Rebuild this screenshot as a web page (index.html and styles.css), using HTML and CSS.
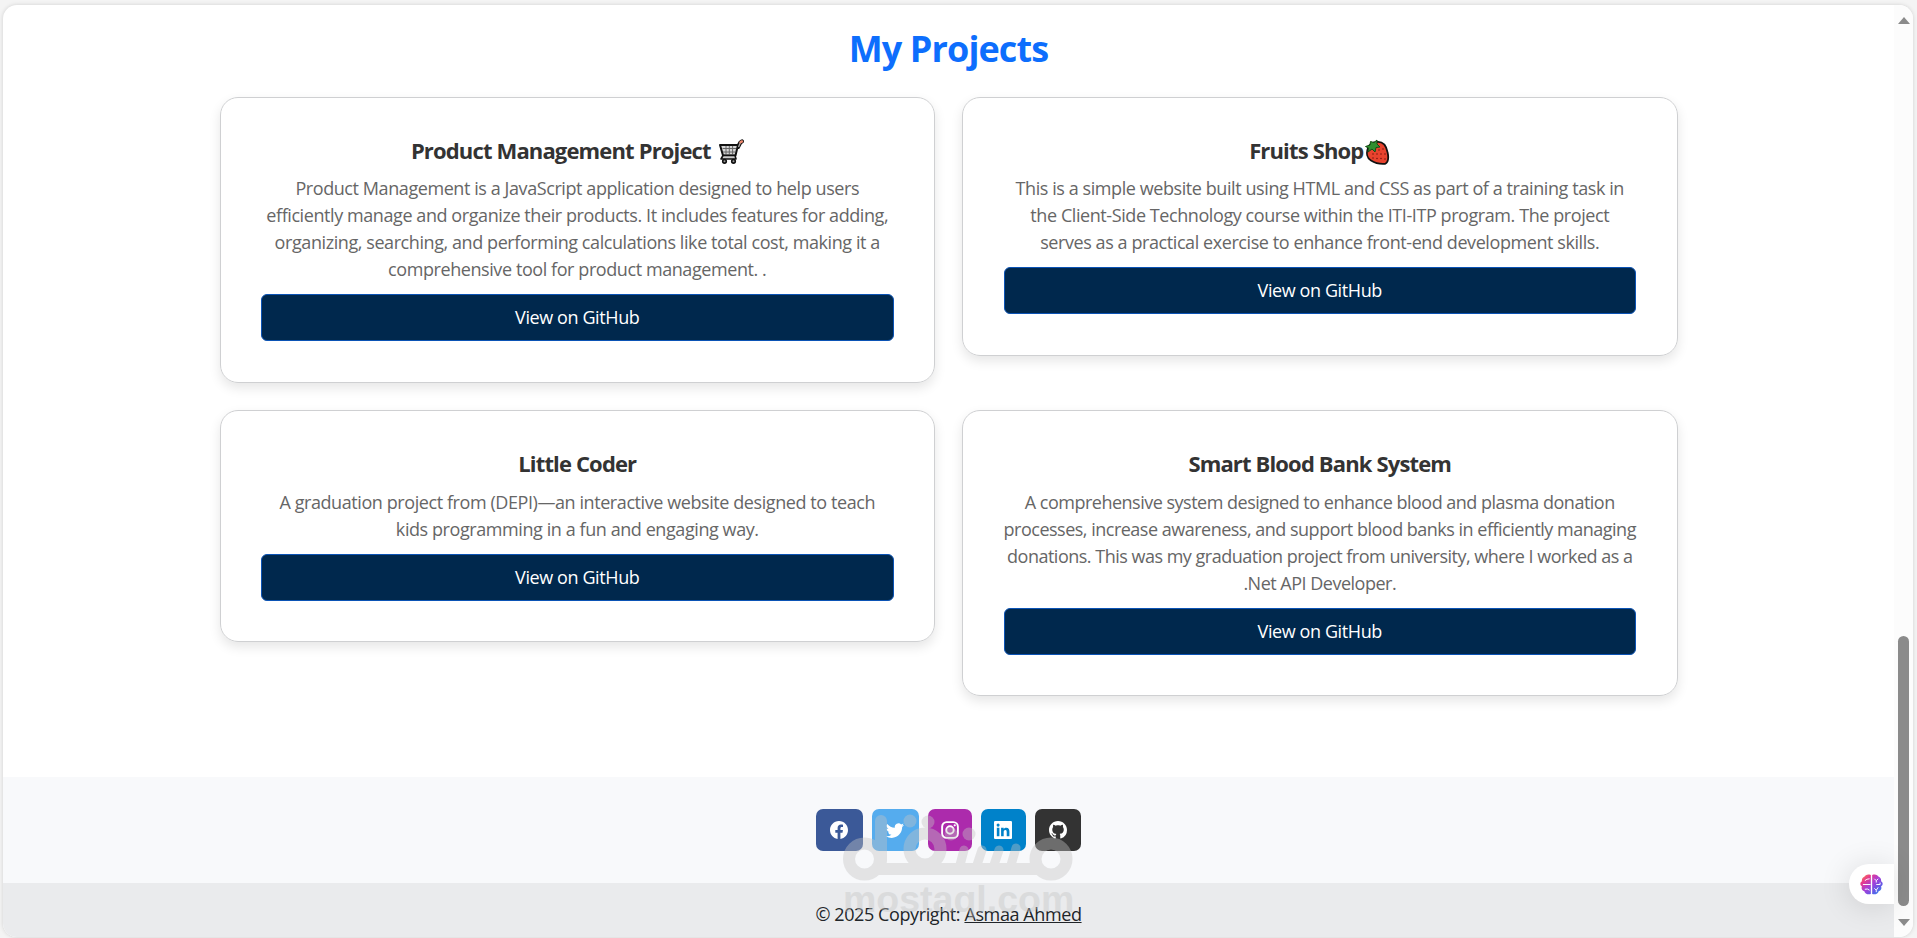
FILE: index.html
```html
<!DOCTYPE html>
<html lang="en">
<head>
    <meta charset="UTF-8">
    <title>My Projects</title>
    <link rel="stylesheet" href="styles.css">
</head>

<body>

<div class="window">
    <div class="page">
        <section class="projects">
            <h2>My Projects</h2>
            <div class="project-list">

                <div class="card with-emoji">
                    <h5>Product Management Project
                        <svg class="emoji cart" viewBox="0 0 26 26">
                            <path d="M20 8 22.3 3.5 24 2.3" fill="none" stroke="#111" stroke-width="4" stroke-linecap="round"/>
                            <path d="M2 6H20L17.5 16.5H5Z" fill="#d5d5d5" stroke="#111" stroke-width="2" stroke-linejoin="round"/>
                            <path d="M4.5 9.5H18M5 13H17M8 7V16M11.3 7V16M14.6 7V16" stroke="#666" stroke-width="1"/>
                            <path d="M5 16.5 3 20H18L17 16.5Z" fill="#ccc" stroke="#111" stroke-width="1.6" stroke-linejoin="round"/>
                            <path d="M20.5 8 22.3 3.8" stroke="#aaa" stroke-width="1.3"/>
                            <path d="M22.5 3.3 24 2.4" stroke="#f08a70" stroke-width="2.4" stroke-linecap="round"/>
                            <g fill="#999" stroke="#111" stroke-width="1.6"><circle cx="6.5" cy="22.3" r="1.8"/><circle cx="15.5" cy="22.3" r="1.8"/></g>
                        </svg>
                    </h5>
                    <p>Product Management is a JavaScript application designed to help users<br>
                        efficiently manage and organize their products. It includes features for adding,<br>
                        organizing, searching, and performing calculations like total cost, making it a<br>
                        comprehensive tool for product management. .</p>
                    <a class="btn" href="#">View on GitHub</a>
                </div>

                <div class="card with-emoji">
                    <h5>Fruits Shop<svg class="emoji berry" viewBox="0 0 26 26">
                            <path d="M4 9C2 14 3 19 7 21.500 11 24 16 25.200 21 24.800 24 24 25 19 23.500 13 22 6 18 2.500 13 3 9 3 5.500 5.500 4 9Z" fill="#e8432e" stroke="#111" stroke-width="1.8"/>
                            <path d="M1.500 7.500 6 6 6.500 2.500 10 3.500 13 1 13 5 16 8 12 8.500 11 13 8 10 4 13 4.500 9Z" fill="#2f8f2f" stroke="#124d14" stroke-width="1" stroke-linejoin="round"/>
                            <g fill="#7c1710"><circle cx="15" cy="11" r=".8"/><circle cx="19" cy="10" r=".8"/><circle cx="9" cy="15" r=".8"/><circle cx="13" cy="15" r=".8"/><circle cx="17" cy="15" r=".8"/><circle cx="21" cy="15" r=".8"/><circle cx="9" cy="19" r=".8"/><circle cx="13" cy="19.500" r=".8"/><circle cx="17" cy="19.500" r=".8"/><circle cx="21" cy="20" r=".8"/></g>
                        </svg></h5>
                    <p>This is a simple website built using HTML and CSS as part of a training task in<br>
                        the Client-Side Technology course within the ITI-ITP program. The project<br>
                        serves as a practical exercise to enhance front-end development skills.</p>
                    <a class="btn" href="#">View on GitHub</a>
                </div>

                <div class="card">
                    <h5>Little Coder</h5>
                    <p>A graduation project from (DEPI)—an interactive website designed to teach<br>
                        kids programming in a fun and engaging way.</p>
                    <a class="btn" href="#">View on GitHub</a>
                </div>

                <div class="card dense">
                    <h5>Smart Blood Bank System</h5>
                    <p>A comprehensive system designed to enhance blood and plasma donation<br>
                        processes, increase awareness, and support blood banks in efficiently managing<br>
                        donations. This was my graduation project from university, where I worked as a<br>
                        .Net API Developer.</p>
                    <a class="btn" href="#">View on GitHub</a>
                </div>

            </div>
        </section>

        <footer>
            <div class="social">
                <a class="facebook" href="#"><svg viewBox="0 0 16 16"><path d="M16 8.049c0-4.446-3.582-8.050-8-8.050C3.580 0-.002 3.603-.002 8.050c0 4.017 2.926 7.347 6.750 7.951v-5.625h-2.030V8.050H6.750V6.275c0-2.017 1.195-3.131 3.022-3.131.876 0 1.791.157 1.791.157v1.980h-1.009c-.993 0-1.303.621-1.303 1.258v1.510h2.218l-.354 2.326H9.250V16c3.824-.604 6.750-3.934 6.750-7.951"/></svg></a>
                <a class="twitter" href="#"><svg viewBox="0 0 16 16"><path d="M5.026 15c6.038 0 9.341-5.003 9.341-9.334q.002-.211-.006-.422A6.700 6.700 0 0 0 16 3.542a6.700 6.700 0 0 1-1.889.518 3.300 3.300 0 0 0 1.447-1.817 6.500 6.500 0 0 1-2.087.793A3.286 3.286 0 0 0 7.875 6.030a9.320 9.320 0 0 1-6.767-3.429 3.290 3.290 0 0 0 1.018 4.382A3.300 3.300 0 0 1 .640 6.575v.045a3.290 3.290 0 0 0 2.632 3.218 3.200 3.200 0 0 1-.865.115 3 3 0 0 1-.614-.057 3.280 3.280 0 0 0 3.067 2.277A6.600 6.600 0 0 1 .780 13.580a6 6 0 0 1-.780-.045A9.340 9.340 0 0 0 5.026 15"/></svg></a>
                <a class="instagram" href="#"><svg viewBox="0 0 16 16"><g fill="none" stroke="#fff" stroke-width="1.700"><rect x="1" y="1" width="14" height="14" rx="4"/><circle cx="8" cy="8" r="3.300"/></g><circle cx="12.200" cy="3.800" r="1"/></svg></a>
                <a class="linkedin" href="#"><svg viewBox="0 0 16 16"><path fill-rule="evenodd" d="M1 0H15Q16 0 16 1V15Q16 16 15 16H1Q0 16 0 15V1Q0 0 1 0ZM2.500 6.100V13.600H4.800V6.100ZM3.650 2.300A1.350 1.350 0 1 0 3.650 5 1.350 1.350 0 1 0 3.650 2.300ZM6.300 6.100V13.600H8.600V9.900C8.600 8.900 8.900 8 10.100 8S11.300 9.100 11.300 10V13.600H13.700V9.500C13.700 7.500 13.200 5.900 10.900 5.900 9.700 5.900 8.900 6.500 8.600 7.100V6.100Z"/></svg></a>
                <a class="github" href="#"><svg viewBox="0 0 16 16"><path d="M8 0C3.580 0 0 3.580 0 8c0 3.540 2.290 6.530 5.470 7.590.4.070.550-.170.550-.380 0-.190-.010-.820-.010-1.490-2.010.370-2.530-.490-2.690-.940-.090-.230-.480-.940-.820-1.130-.280-.150-.680-.520-.010-.530.630-.010 1.080.580 1.230.820.720 1.210 1.870.870 2.330.660.070-.520.280-.870.510-1.070-1.780-.2-3.640-.890-3.640-3.950 0-.870.310-1.590.820-2.150-.080-.2-.360-1.020.080-2.120 0 0 .670-.210 2.200.820.640-.180 1.320-.270 2-.270s1.360.090 2 .270c1.530-1.040 2.200-.820 2.200-.820.440 1.100.160 1.920.080 2.120.510.560.820 1.270.820 2.150 0 3.070-1.870 3.750-3.650 3.950.290.250.540.730.540 1.480 0 1.070-.010 1.930-.010 2.200 0 .210.150.460.550.380A8.010 8.010 0 0 0 16 8c0-4.420-3.580-8-8-8"/></svg></a>
            </div>
            <div class="copyright">© 2025 Copyright: <a href="#">Asmaa Ahmed</a></div>
        </footer>

        <div class="watermark">
            <svg viewBox="0 0 230 68">
                <g fill="none" stroke="currentColor" stroke-width="12">
                    <path d="M38 8V48" stroke-linecap="round"/>
                    <path d="M30 56H195"/>
                    <circle cx="21.500" cy="46" r="15.500"/>
                    <circle cx="82" cy="36" r="15.500"/>
                    <circle cx="208" cy="46" r="15.500"/>
                    <path d="M121 37 117 52M139 37 134 52M156 37 151 52M173 35 168 52" stroke-linecap="round" stroke-width="9"/>
                </g>
                <g fill="currentColor"><circle cx="67" cy="8" r="6.500"/><circle cx="85" cy="9" r="6.500"/><circle cx="108" cy="21" r="6.500"/><circle cx="126" cy="21" r="6.500"/></g>
            </svg>
            <span>mostaql.com</span>
        </div>

        <div class="assistant">
            <svg viewBox="0 0 24 22">
                <defs>
                    <linearGradient id="brain" x1="0" y1="0" x2="1" y2="1">
                        <stop offset="0" stop-color="#ff9a3c"/>
                        <stop offset=".25" stop-color="#e83a8c"/>
                        <stop offset=".5" stop-color="#a63fd8"/>
                        <stop offset=".75" stop-color="#5f5be6"/>
                        <stop offset="1" stop-color="#23a6f5"/>
                    </linearGradient>
                </defs>
                <path fill="url(#brain)" d="M11.300 1V21C8 22 5 20.500 4.500 18 2 17.500 1 15 2 13-.5 11.500 0 8.500 2 7.500 1.500 5 3 3.500 4.500 3 5.500 1 8-.3 11.300 1ZM12.700 1C16-.3 18.500 1 19.500 3 21 3.500 22.500 5 22 7.500 24 8.500 24.500 11.500 22 13 23 15 22 17.500 19.500 18 19 20.500 16 22 12.700 21Z"/>
                <path fill="none" stroke="#fff" d="M3 11H11M5 7Q7 5 10 5M5 16Q8 15 10 17M15 5 17 7V9M17 7 19 5M17 11H21V9M15 15 17 17 19 14M17 17V19"/>
            </svg>
        </div>
    </div>

    <div class="scrollbar">
        <div class="arrow up"></div>
        <div class="track"><div class="thumb"></div></div>
        <div class="arrow down"></div>
    </div>
</div>

</body>
</html>
```

FILE: styles.css
```css
body {
    margin: 0;
    height: 938px;
    box-sizing: border-box;
    padding: 5px 4px 1px 3px;
    overflow: hidden;
    background-color: #f4f4f4;
    color: #212529;
    font-family: "Open Sans", "Noto Sans", sans-serif;
    font-size: 18px;
    line-height: 27px;
    letter-spacing: -0.4px;
}

.window {
    display: flex;
    height: 932px;
    overflow: hidden;
    border-radius: 14px;
    background-color: #ffffff;
    box-shadow: 0 0 4px rgba(0,0,0,0.15);
}

.page {
    position: relative;
    display: flex;
    flex-direction: column;
    flex: 1;
}

/* projects */
.projects {
    height: 772px;
}

.projects h2 {
    margin: 22px 0 27px;
    color: #0d6efd;
    font-size: 36px;
    line-height: 43px;
    letter-spacing: -0.9px;
    text-align: center;
}

.project-list {
    display: grid;
    grid-template-columns: minmax(0, 1fr) minmax(0, 1fr);
    align-items: start;
    gap: 27px;
    width: 1458px;
    margin: 0 auto;
}

.card {
    padding: 40px 40.5px;
    border: 1px solid #cfd0d2;
    border-radius: 18px;
    box-shadow: 0 5px 12px rgba(0,0,0,0.1);
    text-align: center;
    white-space: nowrap;
}

.card h5 {
    height: 26px;
    margin: 0 0 12px;
    color: #333333;
    font-size: 22px;
    line-height: 24px;
    letter-spacing: -0.85px;
}

.card p {
    margin: 0 0 11px;
    color: #666666;
    letter-spacing: -0.42px;
}

.card.with-emoji {
    padding-bottom: 41px;
}

.card.with-emoji h5 {
    margin-bottom: 11px;
}

.card.dense p {
    letter-spacing: -0.5px;
}

.emoji {
    width: 26px;
    height: 26px;
    vertical-align: -6px;
}

.cart {
    margin-left: 2px;
}

.berry {
    margin-left: 1px;
}

.btn {
    display: block;
    padding: 9px;
    border: 1px solid #0b53b5;
    border-radius: 6px;
    background-color: #00284d;
    color: #ffffff;
    text-decoration: none;
}

/* footer */
footer {
    flex: 1;
    display: flex;
    flex-direction: column;
    background-color: #f8f9fb;
    text-align: center;
}

.social {
    display: flex;
    justify-content: center;
    gap: 9px;
    height: 42px;
    padding: 32px 0;
}

.social a {
    display: flex;
    align-items: center;
    justify-content: center;
    border-radius: 7px;
}

.social svg {
    width: 18px;
    height: 18px;
    margin-right: 1px;
    fill: #ffffff;
}

.facebook { width: 47px; background-color: #3b5998; }
.twitter { width: 47px; background-color: #55acee; }
.instagram { width: 44px; background-color: #ac2bac; }
.linkedin { width: 45px; background-color: #0082ca; }
.github { width: 46px; background-color: #333333; }

.copyright {
    flex: 1;
    padding-top: 18px;
    background-color: #eaebed;
    box-sizing: border-box;
}

.copyright a {
    color: inherit;
}

/* stamp lying over the footer */
.watermark {
    position: absolute;
    left: 840px;
    top: 808px;
    width: 230px;
    color: #c4c4c4;
    opacity: 0.4;
    font-family: "Liberation Sans", Arial, sans-serif;
    font-weight: bold;
    font-size: 37.5px;
    line-height: 36px;
    letter-spacing: 0;
    text-align: center;
}

.watermark svg {
    display: block;
    width: 230px;
    height: 68px;
}

/* floating assistant tab on the page edge */
.assistant {
    position: absolute;
    right: 0;
    top: 859px;
    display: flex;
    align-items: center;
    width: 34px;
    height: 40px;
    padding-left: 11px;
    border-radius: 20px 0 0 20px;
    background-color: #ffffff;
    box-shadow: -2px 2px 30px rgba(0,0,0,0.12);
}

.assistant svg {
    width: 23px;
    height: 21px;
}

.scrollbar {
    display: flex;
    flex-direction: column;
    align-items: center;
    justify-content: space-between;
    width: 19px;
    padding: 12px 0 11px;
    box-sizing: border-box;
    background-color: #fcfcfc;
}

.track {
    display: flex;
    flex: 1;
    align-items: flex-end;
    padding-bottom: 13px;
}

.thumb {
    width: 11px;
    height: 270px;
    border-radius: 6px;
    background-color: #8b8b8b;
}

.arrow {
    border: 6.5px solid transparent;
    border-top: 0;
    border-bottom: 7px solid #8b8b8b;
}

.arrow.down {
    border-top: 7px solid #8b8b8b;
    border-bottom: 0;
}
```
